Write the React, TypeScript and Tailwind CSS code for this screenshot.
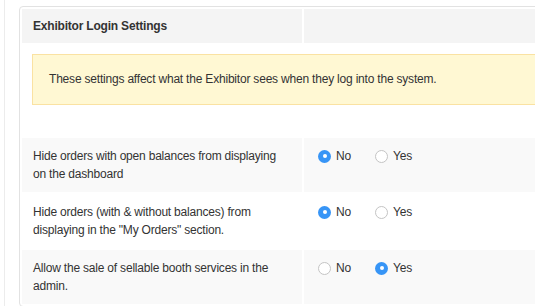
import React from "react";

function Radio({ checked, label }: { checked: boolean; label: string }) {
  return (
    <div className="flex items-center w-[57px] shrink-0">
      {checked ? (
        <span className="w-[13px] h-[13px] rounded-full bg-[#3795f6] flex items-center justify-center shrink-0">
          <span className="w-[4px] h-[4px] rounded-full bg-white" />
        </span>
      ) : (
        <span className="w-[13px] h-[13px] rounded-full bg-white border border-[#c4c4c4] shrink-0" />
      )}
      <span className="ml-[5px]">{label}</span>
    </div>
  );
}

function Row({
  text,
  value,
  shaded,
}: {
  text: string;
  value: "No" | "Yes";
  shaded: boolean;
}) {
  const bg = shaded ? "bg-[#f9f9f9]" : "bg-white";
  return (
    <>
      <div className={`${bg} pl-[11px] pr-[15px] py-[9px] leading-[18px]`}>{text}</div>
      <div className={`${bg} pl-[14px] py-[9px] leading-[18px] flex items-start`}>
        <div className="flex items-center h-[18px]">
          <Radio checked={value === "No"} label="No" />
          <Radio checked={value === "Yes"} label="Yes" />
        </div>
      </div>
    </>
  );
}

export default function App() {
  return (
    <div
      className="w-[535px] h-[306px] overflow-hidden bg-white flex text-[12px] tracking-[-0.2px] text-[#333]"
      style={{ fontFamily: '"Liberation Sans", Arial, Helvetica, sans-serif' }}
    >
      <div className="w-[4px] shrink-0" />
      <div className="w-px shrink-0 bg-[#ececec]" />
      <div className="ml-[14px] mt-[6px] shrink-0">
        <div className="w-[560px] border border-[#e2e2e2] rounded-[4px] p-[2px]">
          <div className="grid grid-cols-[280px_1fr] gap-[2px]">
            <div className="bg-[#f4f4f4] h-[34px] pl-[11px] flex items-center font-bold">
              Exhibitor Login Settings
            </div>
            <div className="bg-[#f4f4f4] h-[34px]" />
            <div className="col-span-2 bg-white pl-[10px] pt-[9px] pb-[31px]">
              <div className="bg-[#fff8d3] border border-[#fae2a2] pl-[16px] py-[15px] leading-[19px]">
                These settings affect what the Exhibitor sees when they log into the system.
              </div>
            </div>
            <Row
              text="Hide orders with open balances from displaying on the dashboard"
              value="No"
              shaded
            />
            <Row
              text={'Hide orders (with & without balances) from displaying in the "My Orders" section.'}
              value="No"
              shaded={false}
            />
            <Row
              text="Allow the sale of sellable booth services in the admin."
              value="Yes"
              shaded
            />
          </div>
        </div>
      </div>
    </div>
  );
}
